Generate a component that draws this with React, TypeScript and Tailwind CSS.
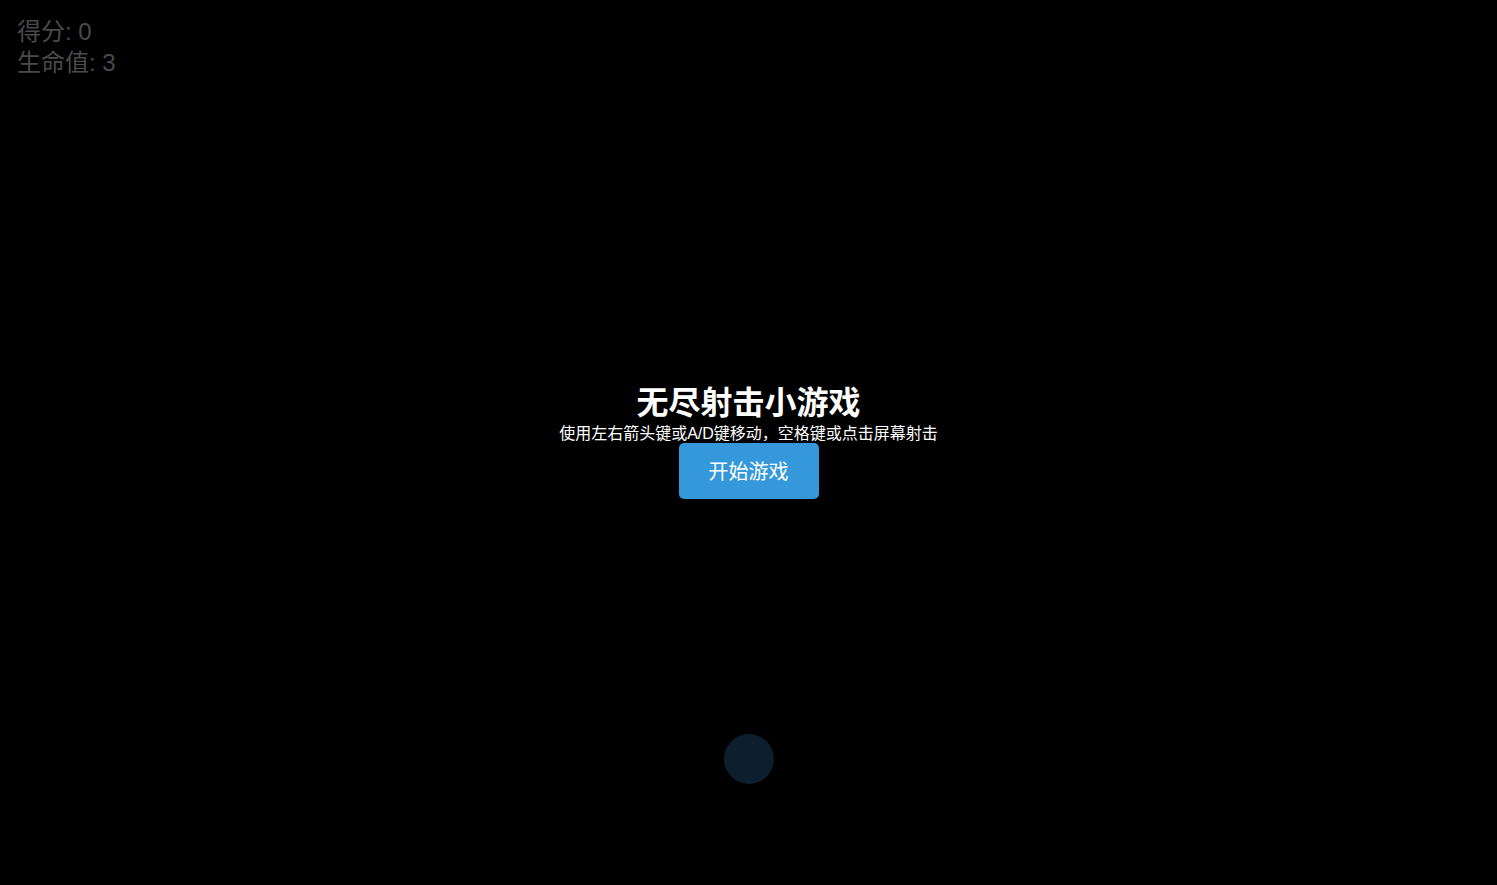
export default function App() {
  return (
    <div
      className="relative h-screen w-full overflow-hidden bg-black"
      style={{ fontFamily: '"Liberation Sans", "Noto Sans CJK SC", sans-serif' }}
    >
      {/* HUD */}
      <div className="absolute left-[17px] top-[16px] text-[24px] leading-[31px] text-[#4a4a4a]">
        <div>得分: 0</div>
        <div>生命值: 3</div>
      </div>

      {/* player */}
      <div className="absolute bottom-[101px] left-1/2 h-[50px] w-[50px] -translate-x-1/2 rounded-full bg-[#0d1f2d]" />

      {/* start overlay */}
      <div className="absolute inset-0 flex flex-col items-center justify-center text-white">
        <h1 className="m-0 mb-[3px] mt-[2px] text-[32px] font-bold leading-[30px]">无尽射击小游戏</h1>
        <p className="m-0 mt-[4px] text-[16px] leading-[18px]">使用左右箭头键或A/D键移动，空格键或点击屏幕射击</p>
        <button className="rounded-[5px] bg-[#3498db] px-[30px] pb-[12px] pt-[14px] text-[20px] leading-[30px] text-white">
          开始游戏
        </button>
      </div>
    </div>
  );
}
